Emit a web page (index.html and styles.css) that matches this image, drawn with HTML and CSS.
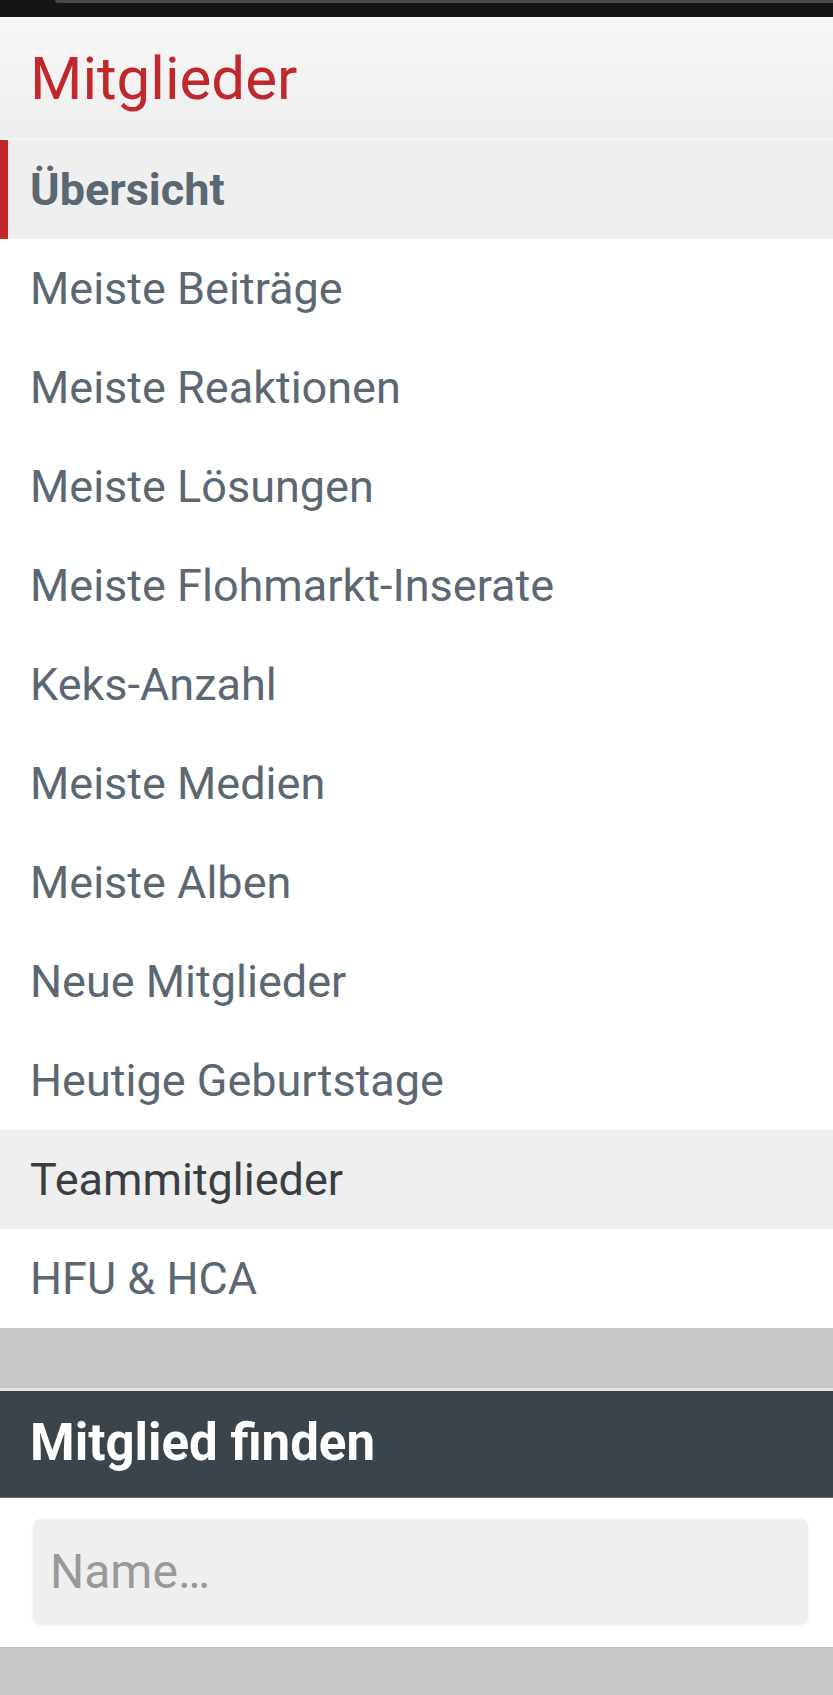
FILE: index.html
```html
<!DOCTYPE html>
<html lang="de">
<head>
<meta charset="utf-8">
<title>Mitglieder</title>
<link rel="stylesheet" href="styles.css">
</head>
<body>
<div class="statusbar"><div class="statusbar-edge"></div></div>
<div class="block">
  <div class="block-header"><h1 class="block-title">Mitglieder</h1></div>
  <nav class="menu">
    <a class="menu-item is-active" href="#">Übersicht</a>
    <a class="menu-item" href="#">Meiste Beiträge</a>
    <a class="menu-item" href="#">Meiste Reaktionen</a>
    <a class="menu-item" href="#">Meiste Lösungen</a>
    <a class="menu-item" href="#">Meiste Flohmarkt-Inserate</a>
    <a class="menu-item" href="#">Keks-Anzahl</a>
    <a class="menu-item" href="#">Meiste Medien</a>
    <a class="menu-item" href="#">Meiste Alben</a>
    <a class="menu-item" href="#">Neue Mitglieder</a>
    <a class="menu-item" href="#">Heutige Geburtstage</a>
    <a class="menu-item is-hover" href="#">Teammitglieder</a>
    <a class="menu-item" href="#">HFU &amp; HCA</a>
  </nav>
</div>
<div class="spacer"></div>
<div class="block">
  <div class="find-header"><h2 class="find-title">Mitglied finden</h2></div>
  <div class="find-body">
    <input class="find-input" type="text" placeholder="Name…">
  </div>
</div>
<div class="footer-gap"></div>
</body>
</html>
```
FILE: styles.css
```css
html, body {
  margin: 0;
  padding: 0;
  background: #ffffff;
  font-family: Roboto, "Liberation Sans", sans-serif;
}

.statusbar {
  height: 17px;
  background: #151515;
}

.statusbar-edge {
  margin-left: 55px;
  height: 3px;
  background: #4a4a4a;
  border-bottom-left-radius: 6px;
}

.block-header {
  height: 123px;
  display: flex;
  align-items: center;
  padding-left: 30px;
  background: linear-gradient(to bottom, #f7f7f7, #eeeeee);
  border-bottom: 2px solid #f7f7f7;
  box-sizing: border-box;
}

.block-title {
  margin: 0;
  font-size: 60px;
  font-weight: 400;
  color: #c0292b;
  line-height: 1;
  padding-top: 2px;
}

.menu {
  display: flex;
  flex-direction: column;
}

.menu-item {
  height: 99px;
  display: flex;
  align-items: center;
  padding-left: 30px;
  font-size: 45px;
  color: #5b6772;
  text-decoration: none;
  box-sizing: border-box;
}

.menu-item.is-active {
  background: #efefef;
  border-left: 8px solid #c0292b;
  padding-left: 22px;
  font-weight: 700;
}

.menu-item.is-hover {
  background: #efefef;
  color: #393e44;
}

.spacer {
  height: 63px;
  background: #c7c7c7;
  border-bottom: 3px solid #e6e6e6;
  box-sizing: border-box;
}

.find-header {
  height: 107px;
  display: flex;
  align-items: center;
  padding-left: 30px;
  background: #3b434b;
  border-bottom: 1px solid #6b7178;
  box-sizing: border-box;
}

.find-title {
  margin: 0;
  font-size: 51px;
  font-weight: 700;
  color: #ffffff;
  line-height: 1;
  padding-bottom: 4px;
}

.find-body {
  padding: 21px 25px 24px 33px;
}

.find-input {
  display: block;
  width: 100%;
  height: 104px;
  box-sizing: border-box;
  border: none;
  border-radius: 7px;
  background: #efefef;
  box-shadow: 0 2px 3px rgba(0, 0, 0, 0.08);
  padding: 0 0 0 17px;
  font-family: Roboto, "Liberation Sans", sans-serif;
  font-size: 48px;
  color: #333;
  outline: none;
}

.find-input::placeholder {
  color: #999999;
}

.footer-gap {
  height: 48px;
  background: #c7c7c7;
  border-top: 1px solid #bdbdbd;
}
```
